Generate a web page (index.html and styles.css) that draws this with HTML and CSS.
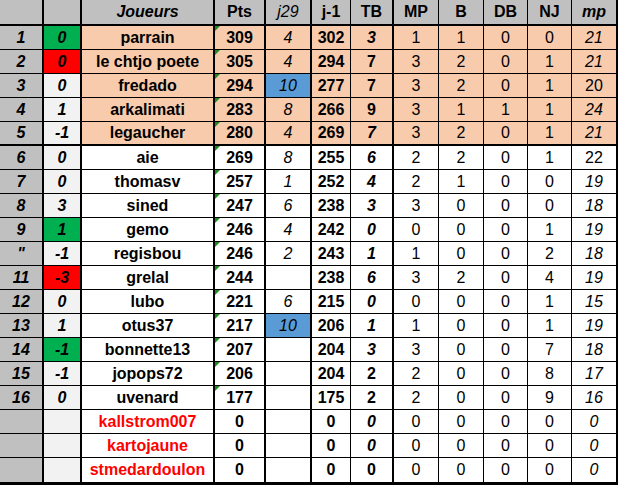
FILE: index.html
```html
<!DOCTYPE html>
<html lang="fr">
<head>
<meta charset="utf-8">
<title>Classement</title>
<link rel="stylesheet" href="styles.css">
</head>
<body>
<div class="sheet">
  <div class="row head">
    <div class="rk"></div><div class="ch"></div><div class="nm it">Joueurs</div><div class="pt">Pts</div><div class="j">j29</div><div class="jm">j-1</div><div class="tb">TB</div><div class="n">MP</div><div class="n">B</div><div class="n">DB</div><div class="n">NJ</div><div class="mp">mp</div>
  </div>
  <div class="row top">
    <div class="rk">1</div><div class="ch g">0</div><div class="nm">parrain</div><div class="pt tri">309</div><div class="j">4</div><div class="jm">302</div><div class="tb">3</div><div class="n">1</div><div class="n">1</div><div class="n">0</div><div class="n">0</div><div class="mp">21</div>
  </div>
  <div class="row top">
    <div class="rk">2</div><div class="ch r">0</div><div class="nm">le chtjo poete</div><div class="pt tri">305</div><div class="j">4</div><div class="jm">294</div><div class="tb up">7</div><div class="n">3</div><div class="n">2</div><div class="n">0</div><div class="n">1</div><div class="mp">21</div>
  </div>
  <div class="row top">
    <div class="rk">3</div><div class="ch">0</div><div class="nm">fredado</div><div class="pt tri">294</div><div class="j b">10</div><div class="jm">277</div><div class="tb up">7</div><div class="n">3</div><div class="n">2</div><div class="n">0</div><div class="n">1</div><div class="mp up">20</div>
  </div>
  <div class="row top">
    <div class="rk">4</div><div class="ch">1</div><div class="nm">arkalimati</div><div class="pt tri">283</div><div class="j">8</div><div class="jm">266</div><div class="tb up">9</div><div class="n">3</div><div class="n">1</div><div class="n">1</div><div class="n">1</div><div class="mp">24</div>
  </div>
  <div class="row top sep">
    <div class="rk">5</div><div class="ch">-1</div><div class="nm">legaucher</div><div class="pt tri">280</div><div class="j">4</div><div class="jm">269</div><div class="tb">7</div><div class="n">3</div><div class="n">2</div><div class="n">0</div><div class="n">1</div><div class="mp">21</div>
  </div>
  <div class="row">
    <div class="rk">6</div><div class="ch">0</div><div class="nm">aie</div><div class="pt tri">269</div><div class="j">8</div><div class="jm">255</div><div class="tb">6</div><div class="n">2</div><div class="n">2</div><div class="n">0</div><div class="n">1</div><div class="mp up">22</div>
  </div>
  <div class="row">
    <div class="rk">7</div><div class="ch">0</div><div class="nm">thomasv</div><div class="pt tri">257</div><div class="j">1</div><div class="jm">252</div><div class="tb">4</div><div class="n">2</div><div class="n">1</div><div class="n">0</div><div class="n">0</div><div class="mp">19</div>
  </div>
  <div class="row">
    <div class="rk">8</div><div class="ch">3</div><div class="nm">sined</div><div class="pt tri">247</div><div class="j">6</div><div class="jm">238</div><div class="tb">3</div><div class="n">3</div><div class="n">0</div><div class="n">0</div><div class="n">0</div><div class="mp">18</div>
  </div>
  <div class="row">
    <div class="rk">9</div><div class="ch g">1</div><div class="nm">gemo</div><div class="pt tri">246</div><div class="j">4</div><div class="jm">242</div><div class="tb">0</div><div class="n">0</div><div class="n">0</div><div class="n">0</div><div class="n">1</div><div class="mp">19</div>
  </div>
  <div class="row">
    <div class="rk">"</div><div class="ch">-1</div><div class="nm">regisbou</div><div class="pt tri">246</div><div class="j">2</div><div class="jm">243</div><div class="tb">1</div><div class="n">1</div><div class="n">0</div><div class="n">0</div><div class="n">2</div><div class="mp">18</div>
  </div>
  <div class="row">
    <div class="rk">11</div><div class="ch r">-3</div><div class="nm">grelal</div><div class="pt tri">244</div><div class="j"></div><div class="jm">238</div><div class="tb">6</div><div class="n">3</div><div class="n">2</div><div class="n">0</div><div class="n">4</div><div class="mp">19</div>
  </div>
  <div class="row">
    <div class="rk">12</div><div class="ch">0</div><div class="nm">lubo</div><div class="pt tri">221</div><div class="j">6</div><div class="jm">215</div><div class="tb">0</div><div class="n">0</div><div class="n">0</div><div class="n">0</div><div class="n">1</div><div class="mp">15</div>
  </div>
  <div class="row">
    <div class="rk">13</div><div class="ch">1</div><div class="nm">otus37</div><div class="pt tri">217</div><div class="j b">10</div><div class="jm">206</div><div class="tb">1</div><div class="n">1</div><div class="n">0</div><div class="n">0</div><div class="n">1</div><div class="mp">19</div>
  </div>
  <div class="row">
    <div class="rk">14</div><div class="ch g">-1</div><div class="nm">bonnette13</div><div class="pt tri">207</div><div class="j"></div><div class="jm">204</div><div class="tb">3</div><div class="n">3</div><div class="n">0</div><div class="n">0</div><div class="n">7</div><div class="mp">18</div>
  </div>
  <div class="row">
    <div class="rk">15</div><div class="ch">-1</div><div class="nm">jopops72</div><div class="pt tri">206</div><div class="j"></div><div class="jm">204</div><div class="tb up">2</div><div class="n">2</div><div class="n">0</div><div class="n">0</div><div class="n">8</div><div class="mp">17</div>
  </div>
  <div class="row">
    <div class="rk">16</div><div class="ch">0</div><div class="nm">uvenard</div><div class="pt tri">177</div><div class="j"></div><div class="jm">175</div><div class="tb up">2</div><div class="n">2</div><div class="n">0</div><div class="n">0</div><div class="n">9</div><div class="mp">16</div>
  </div>
  <div class="row">
    <div class="rk"></div><div class="ch"></div><div class="nm out">kallstrom007</div><div class="pt">0</div><div class="j"></div><div class="jm">0</div><div class="tb">0</div><div class="n">0</div><div class="n">0</div><div class="n">0</div><div class="n">0</div><div class="mp">0</div>
  </div>
  <div class="row">
    <div class="rk"></div><div class="ch"></div><div class="nm out">kartojaune</div><div class="pt">0</div><div class="j"></div><div class="jm">0</div><div class="tb">0</div><div class="n">0</div><div class="n">0</div><div class="n">0</div><div class="n">0</div><div class="mp">0</div>
  </div>
  <div class="row last">
    <div class="rk"></div><div class="ch"></div><div class="nm out">stmedardoulon</div><div class="pt">0</div><div class="j"></div><div class="jm">0</div><div class="tb up">0</div><div class="n">0</div><div class="n">0</div><div class="n">0</div><div class="n">0</div><div class="mp">0</div>
  </div>
</div>
</body>
</html>
```
FILE: styles.css
```css
body {
  margin: 0;
  background: #ffffff;
  font-family: "Liberation Sans", Arial, sans-serif;
  color: #000000;
}

.sheet {
  width: 618px;
}

.row {
  display: grid;
  grid-template-columns: 44px 38px 133px 51px 46px 39px 43px 45px 45px 44px 44px 46px;
  height: 24px;
}

.row > div {
  box-sizing: border-box;
  display: flex;
  align-items: center;
  justify-content: center;
  border-right: 1px solid #000;
  border-bottom: 1px solid #000;
  background: #ffffff;
  font-size: 16px;
  line-height: 1;
  white-space: nowrap;
}

/* column styles */
.row > .rk {
  background: #c0c0c0;
  font-weight: bold;
  font-style: italic;
  border-right-width: 2px;
}
.row > .ch {
  background: #f2f2f2;
  font-weight: bold;
  font-style: italic;
  border-right-width: 2px;
}
.row > .nm {
  font-weight: bold;
  border-right-width: 2px;
}
.row > .pt {
  position: relative;
  font-weight: bold;
  border-right-width: 2px;
}
.row > .j {
  font-style: italic;
  border-right-width: 2px;
}
.row > .jm {
  font-weight: bold;
}
.row > .tb {
  font-weight: bold;
  font-style: italic;
  border-right-width: 2px;
}
.row > .mp {
  font-style: italic;
  border-right-width: 2px;
}

.row > .up {
  font-style: normal;
}
.row > .it {
  font-style: italic;
}

/* cell states */
.row > .g { background: #00b050; }
.row > .r { background: #ff0000; }
.row > .j.b { background: #5b9bd5; }
.row > .out { color: #ff0000; }

.tri::before {
  content: "";
  position: absolute;
  left: 0;
  top: 0;
  border-top: 5px solid #1f8a1f;
  border-right: 5px solid transparent;
}

/* peach top five */
.top > div:not(.rk):not(.ch):not(.b) {
  background: #f8cbad;
}

/* header */
.head {
  height: 26px;
}
.head > div,
.row.head > .ch,
.row.head > .j {
  background: #c0c0c0;
  font-weight: bold;
  border-bottom-width: 2px;
}
.row.head > .j {
  font-weight: normal;
}
.row.head > .tb {
  font-style: normal;
}
.row.head > .mp {
  font-weight: bold;
}

.sep > div {
  border-bottom-width: 2px;
}

.last {
  height: 27px;
}
.last > div {
  border-bottom-width: 3px;
}
```
